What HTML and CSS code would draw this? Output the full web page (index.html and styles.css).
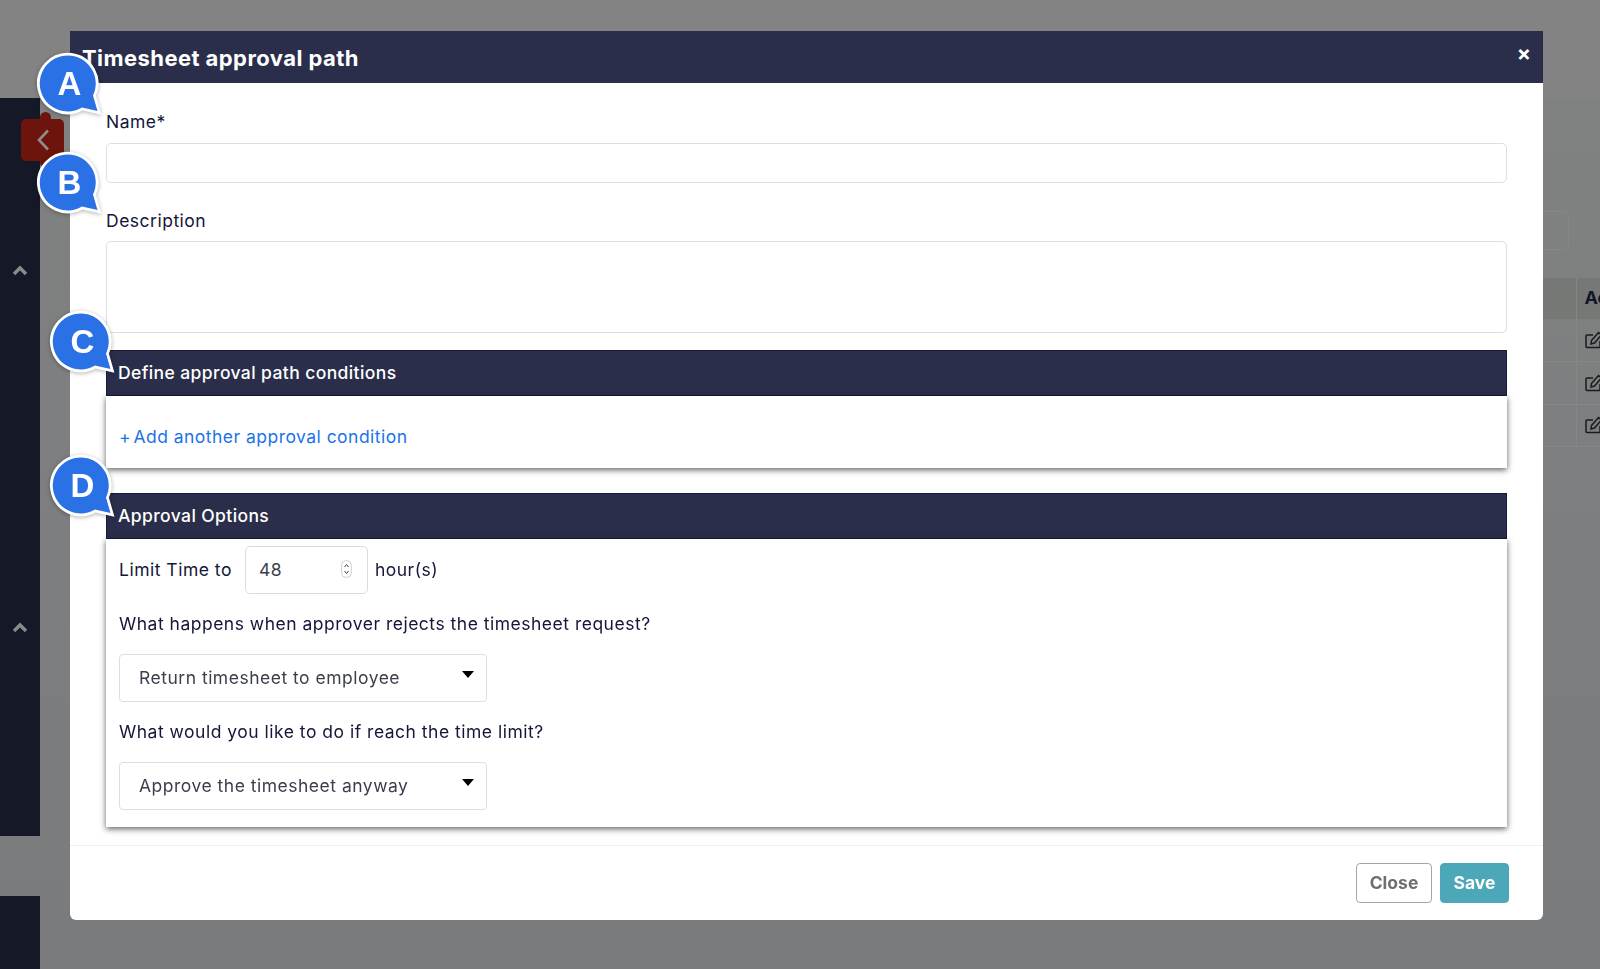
FILE: index.html
```html
<!DOCTYPE html>
<html lang="en">
<head>
<meta charset="utf-8">
<title>Timesheet approval path</title>
<link rel="stylesheet" href="styles.css">
</head>
<body>
<div class="page">
  <header class="topbar"></header>
  <div class="shell">
    <aside class="side">
      <div class="side-top">
        <button class="collapse" type="button" aria-label="Collapse">
          <svg width="14" height="22" viewBox="0 0 14 22"><path d="M12 1.5 3 11l9 9.5" fill="none" stroke="#8f8c8a" stroke-width="2.6"/></svg>
        </button>
        <svg class="chev chev-first" width="16" height="11" viewBox="0 0 16 11"><path d="M2 9l6-6 6 6" fill="none" stroke="#8a8a8a" stroke-width="3.4"/></svg>
        <svg class="chev chev-second" width="16" height="11" viewBox="0 0 16 11"><path d="M2 9l6-6 6 6" fill="none" stroke="#8a8a8a" stroke-width="3.4"/></svg>
      </div>
      <div class="side-bottom"></div>
    </aside>
    <main class="content">
      <div class="search"></div>
      <table class="grid">
        <thead><tr><th class="wide"></th><th class="actions">Ac</th></tr></thead>
        <tbody>
          <tr><td></td><td class="actions"><svg class="edit" width="18" height="18" viewBox="0 0 18 18"><path d="M15 10v5.500a1 1 0 0 1-1 1H2a1 1 0 0 1-1-1V5a1 1 0 0 1 1-1h6M6.500 9.500 13.500 1.500l3 2.500-7 8-3.500 1z" fill="none" stroke="#1b1b1d" stroke-width="1.500"/></svg></td></tr>
          <tr><td></td><td class="actions"><svg class="edit" width="18" height="18" viewBox="0 0 18 18"><path d="M15 10v5.500a1 1 0 0 1-1 1H2a1 1 0 0 1-1-1V5a1 1 0 0 1 1-1h6M6.500 9.500 13.500 1.500l3 2.500-7 8-3.500 1z" fill="none" stroke="#1b1b1d" stroke-width="1.500"/></svg></td></tr>
          <tr><td></td><td class="actions"><svg class="edit" width="18" height="18" viewBox="0 0 18 18"><path d="M15 10v5.500a1 1 0 0 1-1 1H2a1 1 0 0 1-1-1V5a1 1 0 0 1 1-1h6M6.500 9.500 13.500 1.500l3 2.500-7 8-3.500 1z" fill="none" stroke="#1b1b1d" stroke-width="1.500"/></svg></td></tr>
        </tbody>
      </table>
    </main>
  </div>
</div>

<div class="backdrop">
  <section class="modal">
    <header class="modal-head">
      <h1 class="modal-title">Timesheet approval path</h1>
      <span class="modal-x">×</span>
    </header>
    <div class="modal-body">
      <label class="label label-name">Name*</label>
      <input class="input" type="text">
      <label class="label label-desc">Description</label>
      <textarea class="textarea"></textarea>

      <div class="panel panel-first">
        <h2 class="panel-head">Define approval path conditions</h2>
        <div class="panel-body panel-link">
          <a class="add-link" href="#"><span class="plus">+</span> Add another approval condition</a>
        </div>
      </div>

      <div class="panel panel-second">
        <h2 class="panel-head">Approval Options</h2>
        <div class="panel-body panel-options">
          <div class="limit">
            <span class="text">Limit Time to</span>
            <div class="number">
              <span>48</span>
              <svg width="11" height="18" viewBox="0 0 11 18"><rect x="0.700" y="0.700" width="9.600" height="16.600" rx="4" fill="#fff" stroke="#cfd0d4"/><path d="M3.500 7l2-2.500 2 2.500M3.500 11l2 2.500 2-2.500" fill="none" stroke="#44464f" stroke-width="1"/></svg>
            </div>
            <span class="text">hour(s)</span>
          </div>
          <p class="text question q-first">What happens when approver rejects the timesheet request?</p>
          <div class="select"><span>Return timesheet to employee</span></div>
          <p class="text question q-second">What would you like to do if reach the time limit?</p>
          <div class="select"><span>Approve the timesheet anyway</span></div>
        </div>
      </div>
    </div>
    <footer class="modal-foot">
      <button class="btn btn-close" type="button">Close</button>
      <button class="btn btn-save" type="button">Save</button>
    </footer>
  </section>

  <svg class="bubble bubble-a" width="68" height="68" viewBox="-3 -3 68 68"><path class="bubble-shape" d="M53 40.600 57.500 56 42 52.600A28 28 0 1 1 53 40.600Z"/><text class="bubble-letter" x="29.500" y="40">A</text></svg>
  <svg class="bubble bubble-b" width="68" height="68" viewBox="-3 -3 68 68"><path class="bubble-shape" d="M53 40.600 57.500 56 42 52.600A28 28 0 1 1 53 40.600Z"/><text class="bubble-letter" x="29.500" y="40">B</text></svg>
  <svg class="bubble bubble-c" width="68" height="68" viewBox="-3 -3 68 68"><path class="bubble-shape" d="M53 40.600 57.500 56 42 52.600A28 28 0 1 1 53 40.600Z"/><text class="bubble-letter" x="29.500" y="40">C</text></svg>
  <svg class="bubble bubble-d" width="68" height="68" viewBox="-3 -3 68 68"><path class="bubble-shape" d="M53 40.600 57.500 56 42 52.600A28 28 0 1 1 53 40.600Z"/><text class="bubble-letter" x="29.500" y="40">D</text></svg>
</div>
</body>
</html>
```
FILE: styles.css
```css
* { box-sizing: border-box; }
html, body { margin: 0; height: 100%; }
body {
  background: #7b7c7e;
  font-family: Inter, "Liberation Sans", sans-serif;
  overflow: hidden;
}
.page { height: 969px; display: flex; flex-direction: column; }
.topbar { height: 98px; background: #838383; flex: none; }
.shell { flex: 1; display: flex; min-height: 0; background: linear-gradient(#808181, #7a7b7d); }
.side { width: 40px; flex: none; display: flex; flex-direction: column; gap: 60px; }
.side-top { height: 738px; background: #151827; position: relative; display: flex; flex-direction: column; align-items: center; }
.side-bottom { flex: 1; background: #151827; }
.collapse {
  position: absolute; left: 21px; top: 21px; width: 43px; height: 42px;
  padding: 0; border: 0; border-radius: 5px; background: #6d140c;
  display: flex; align-items: center; justify-content: center;
}
.collapse::before { content: ""; position: absolute; left: 19px; top: -7px; width: 11px; height: 56px; background: #6d140c; border-radius: 6px; }
.collapse svg { position: relative; }
.chev { display: block; }
.chev-first { margin-top: 167px; }
.chev-second { margin-top: 346px; }
.content { flex: 1; min-width: 0; overflow: hidden; display: flex; flex-direction: column; align-items: flex-end; padding-top: 113px; }
.search { width: 120px; height: 39px; margin-right: 31px; border: 1px solid #858687; border-radius: 5px; background: #7f8080; }
.grid { width: 600px; margin-top: 28px; margin-right: -44px; border-collapse: collapse; flex: none; }
.grid th { height: 41px; background: #767876; border-right: 1px solid #858685; padding: 0; }
.grid th.actions { text-align: left; padding-left: 8px; padding-bottom: 3px; font-size: 18px; font-weight: 700; color: #13152b; border: 0; }
.grid td { height: 42.500px; border-bottom: 1px solid #858685; border-right: 1px solid #858685; padding: 0; }
.grid td.actions { width: 68px; padding-left: 8px; border-right: 0; }
.edit { display: block; }

.backdrop { position: fixed; inset: 0; padding: 31px 57px 48px 70px; }
.modal { height: 889px; background: #fff; border-radius: 0 0 6px 6px; display: flex; flex-direction: column; }
.modal-head { height: 52px; flex: none; background: #2a2e4a; color: #fff; display: flex; justify-content: space-between; padding: 0 12px 0 12px; align-items: flex-start; }
.modal-title { margin: 14px 0 0; font-size: 22px; line-height: 27px; font-weight: 700; letter-spacing: 0.43px; }
.modal-x { font-size: 21px; line-height: 20px; margin-top: 13px; font-weight: 700; }
.modal-body { flex: 1; padding: 0 36px; }
.label { display: block; font-size: 17.500px; line-height: 20px; letter-spacing: 0.5px; color: #14163a; }
.label-name { margin-top: 29px; }
.label-desc { margin-top: 28px; }
.input { display: block; width: 100%; height: 40px; margin-top: 11px; border: 1px solid #dedfe3; border-radius: 5px; background: #fff; }
.textarea { display: block; width: 100%; height: 92px; margin-top: 10px; border: 1px solid #dedfe3; border-radius: 5px; background: #fff; resize: none; }
.panel-first { margin-top: 17px; }
.panel-second { margin-top: 25px; }
.panel-head { margin: 0; height: 46px; background: #2a2e4a; border: 1px solid #16193a; color: #fff; font-size: 17.500px; letter-spacing: 0.4px; font-weight: 500; line-height: 44px; padding-left: 11px; }
.panel-body { background: #fff; padding: 0 13px; box-shadow: 0 2px 6px rgba(0,0,0,.62); }
.panel-link { height: 72px; display: flex; align-items: center; padding-top: 8px; }
.add-link { font-size: 17.500px; letter-spacing: 0.47px; color: #1a73e8; text-decoration: none; }
.plus { margin-right: -3px; }
.panel-options { height: 288px; padding-top: 7px; }
.text { font-size: 17.500px; letter-spacing: 0.5px; color: #14163a; }
.limit { display: flex; align-items: center; gap: 7px; }
.limit .text { padding-bottom: 2px; }
.limit .text:first-child { margin-right: 6px; }
.number { width: 123px; height: 48px; border: 1px solid #d9dadf; border-radius: 5px; display: flex; align-items: center; justify-content: space-between; padding: 0 15px 2px 13px; font-size: 17.500px; letter-spacing: 0.5px; color: #3b3e4c; }
.question { margin: 0; line-height: 20px; }
.q-first { margin-top: 20px; }
.q-second { margin-top: 20px; }
.select { position: relative; width: 368px; height: 48px; margin-top: 20px; border: 1px solid #d9dfe5; border-radius: 4px; display: flex; align-items: center; padding: 0 0 2px 19px; font-size: 17.500px; letter-spacing: 0.5px; color: #3b3e4c; }
.select::after { content: ""; position: absolute; right: 12px; top: 16px; border-style: solid; border-width: 7px 6.500px 0; border-color: #000 transparent transparent; }
.modal-foot { height: 75px; flex: none; border-top: 1px solid #eeeff1; display: flex; justify-content: flex-end; gap: 8px; padding: 17px 34px 0 0; }
.btn { height: 40px; border-radius: 4px; font: 700 17.500px Inter, "Liberation Sans", sans-serif; padding: 0 0 2px; }
.btn-close { width: 76px; background: #fff; border: 1px solid #a5a5a5; color: #6f6f6f; }
.btn-save { width: 69px; background: #4ca8b8; border: 1px solid #4ca8b8; color: #fff; }

.bubble { position: absolute; overflow: visible; filter: drop-shadow(0 1px 2px rgba(0,0,0,.3)); }
.bubble-a { left: 37px; top: 52px; }
.bubble-b { left: 37px; top: 151px; }
.bubble-c { left: 50px; top: 310px; }
.bubble-d { left: 50px; top: 454px; }
.bubble-shape { fill: #2a71e6; stroke: #fff; stroke-width: 5.500; paint-order: stroke; stroke-linejoin: miter; }
.bubble-letter { font: 700 33px "Liberation Sans", sans-serif; fill: #fff; text-anchor: middle; }
```
